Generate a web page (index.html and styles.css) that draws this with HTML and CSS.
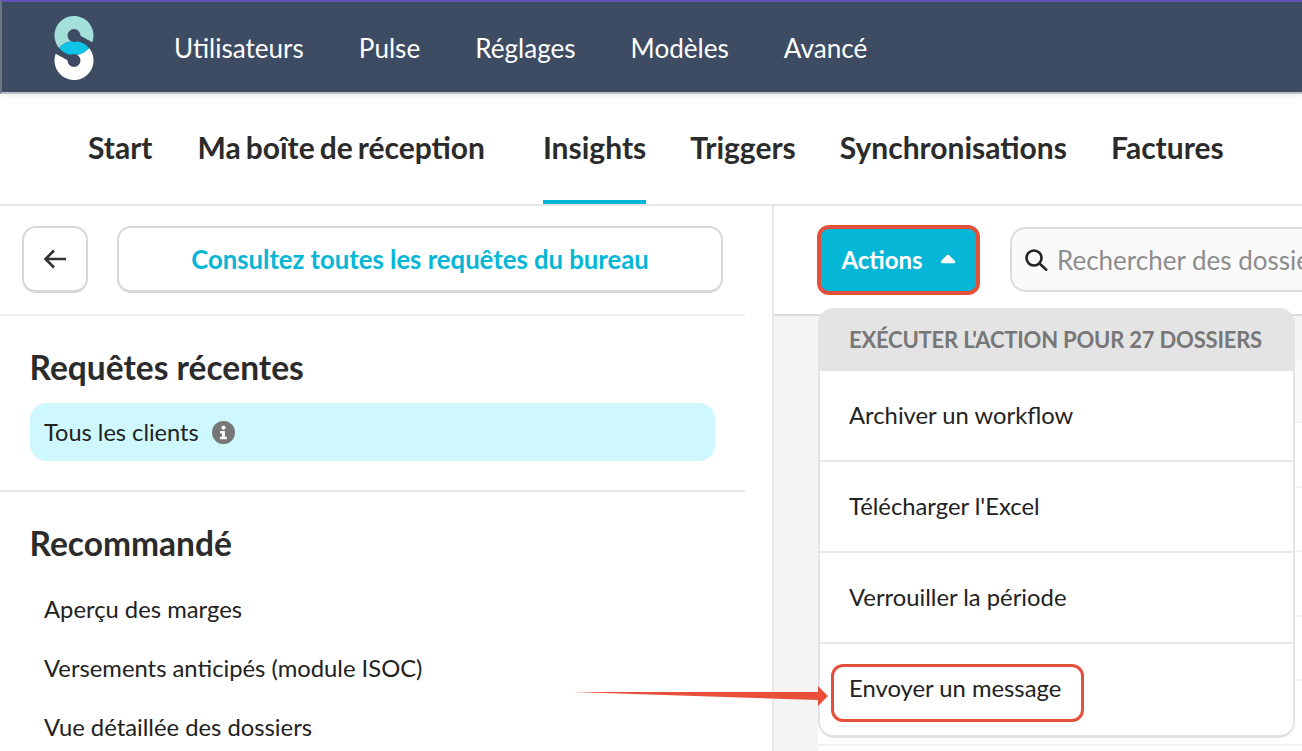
FILE: index.html
```html
<!DOCTYPE html>
<html lang="fr">
  <head>
    <meta charset="UTF-8" />
    <title>Insights</title>
    <link rel="stylesheet" href="styles.css">
  </head>
  <body>
    <header class="topbar">
      <svg class="logo" width="40" height="64" viewBox="0 0 40 64">
        <path d="M38.300 26.200A19.500 19.500 0 1 0 5 32A19.500 19.500 0 0 1 20 25L26 19.500Z" fill="#a3e0dc"/>
        <path d="M1.700 37.800A19.500 19.500 0 1 0 35 32A19.500 19.500 0 0 1 20 39L14 44.500Z" fill="#fff"/>
        <path d="M5 32A19.500 19.500 0 0 1 35 32A19.500 19.500 0 0 1 5 32Z" fill="#0fc4e6"/>
        <circle cx="20" cy="19.500" r="6.500" fill="#3d4c63"/>
        <circle cx="20" cy="44.500" r="6.500" fill="#3d4c63"/>
      </svg>
      <nav class="topnav">
        <a>Utilisateurs</a>
        <a>Pulse</a>
        <a>Réglages</a>
        <a>Modèles</a>
        <a>Avancé</a>
      </nav>
    </header>

    <nav class="tabs">
      <a>Start</a>
      <a class="inbox">Ma boîte de réception</a>
      <a class="active">Insights</a>
      <a>Triggers</a>
      <a>Synchronisations</a>
      <a>Factures</a>
    </nav>

    <main class="content">
      <aside class="sidebar">
        <div class="side-top">
          <button class="btn back">
            <svg width="24" height="22" viewBox="0 0 24 22" fill="none" stroke="#333" stroke-width="2.600">
              <path d="M23 11H3M11 2.500L2.500 11L11 19.500"/>
            </svg>
          </button>
          <button class="btn all">Consultez toutes les requêtes du bureau</button>
        </div>
        <section class="recent">
          <h2>Requêtes récentes</h2>
          <div class="selected">
            Tous les clients
            <svg width="23" height="23" viewBox="0 0 24 24">
              <circle cx="12" cy="12" r="12" fill="#777"/>
              <circle cx="12" cy="7" r="2.200" fill="#fff"/>
              <path d="M8.500 10.500H13.500V16.500H15.500V19H8.500V16.500H10.500V13H8.500Z" fill="#fff"/>
            </svg>
          </div>
        </section>
        <section class="recommended">
          <h2>Recommandé</h2>
          <ul>
            <li>Aperçu des marges</li>
            <li>Versements anticipés (module ISOC)</li>
            <li>Vue détaillée des dossiers</li>
          </ul>
        </section>
      </aside>

      <section class="main">
        <div class="toolbar">
          <button class="actions">
            Actions
            <svg width="16" height="10" viewBox="0 0 16 10">
              <path d="M8 2L14 8H2Z" fill="#fff" stroke="#fff" stroke-width="2.500" stroke-linejoin="round"/>
            </svg>
          </button>
          <div class="search">
            <svg width="23" height="22" viewBox="0 0 23 22" fill="none" stroke="#222" stroke-width="2.600">
              <circle cx="9" cy="9" r="7.500"/>
              <path d="M14.500 14.500L22 21.500"/>
            </svg>
            <span>Rechercher des dossiers</span>
          </div>
        </div>
        <div class="table-area">
          <div class="table">
            <div class="row head"></div>
            <div class="row tint"></div>
            <div class="row"></div>
            <div class="row"></div>
            <div class="row"></div>
            <div class="row"></div>
            <div class="row"></div>
          </div>
          <div class="menu">
            <div class="menu-head">EXÉCUTER L'ACTION POUR 27 DOSSIERS</div>
            <div class="menu-item">Archiver un workflow</div>
            <div class="menu-item">Télécharger l'Excel</div>
            <div class="menu-item">Verrouiller la période</div>
            <div class="menu-item last">Envoyer un message</div>
          </div>
        </div>
      </section>
    </main>

    <div class="highlight"></div>
    <svg class="arrow" width="260" height="24" viewBox="0 0 260 24">
      <path d="M0 8L246 8L246 2L256 12L246 22L246 16Z" fill="#e8503a"/>
    </svg>
  </body>
</html>
```

FILE: styles.css
```css
html, body {
  margin: 0;
  height: 751px;
  overflow: hidden;
}
body {
  background: #fff;
  color: #2b2b2b;
  font-family: Lato, "Liberation Sans", sans-serif;
  position: relative;
}
a {
  display: block;
}

.topbar {
  height: 90px;
  border-top: 2px solid #6052b8;
  border-left: 2px solid #6b7587;
  border-bottom: 2px solid #b9bec8;
  background: #3d4c63;
  display: flex;
  align-items: center;
  box-shadow: 0 2px 6px rgba(0, 0, 0, 0.08);
}
.logo {
  margin-left: 52px;
  margin-top: 1px;
}
.topnav {
  display: flex;
  gap: 55px;
  margin-left: 80px;
  margin-top: 2px;
  color: #fff;
  font-size: 26.100px;
}

.tabs {
  height: 110px;
  border-bottom: 2px solid #e8e8e8;
  padding-left: 88px;
  display: flex;
  gap: 44px;
  font-size: 30px;
  font-weight: 700;
  color: #2b2b2b;
}
.tabs a {
  height: 110px;
  line-height: 106px;
  box-sizing: border-box;
}
.tabs .inbox {
  margin-left: 1px;
  margin-right: 14px;
  word-spacing: -2.300px;
}
.tabs .active {
  border-bottom: 4px solid #06b6d6;
}

.content {
  display: flex;
  height: 545px;
}

.sidebar {
  width: 772px;
  border-right: 2px solid #e8e8e8;
}
.side-top {
  width: 745px;
  height: 110px;
  box-sizing: border-box;
  border-bottom: 2px solid #efefef;
  padding: 20px 0 0 22px;
  display: flex;
  gap: 29px;
}
.btn {
  height: 67px;
  background: #fff;
  border: 2px solid #d8d8d8;
  border-bottom-width: 3px;
  border-radius: 14px;
  font-family: inherit;
  padding: 0;
}
.back {
  width: 66px;
  display: flex;
  align-items: center;
  justify-content: center;
}
.all {
  width: 606px;
  color: #06b6d6;
  font-size: 25.700px;
  font-weight: 700;
}

.recent {
  width: 745px;
  height: 176px;
  box-sizing: border-box;
  border-bottom: 2px solid #e6e6e6;
  padding: 31px 30px 0 29.500px;
}
h2 {
  margin: 0;
  font-size: 33.500px;
  line-height: 40px;
  font-weight: 700;
  color: #2b2b2b;
}
.selected {
  margin-top: 16px;
  height: 58px;
  border-radius: 16px;
  background: #cff8fe;
  padding-left: 14.500px;
  display: flex;
  align-items: center;
  gap: 13px;
  font-size: 23.600px;
  color: #222;
}

.recommended {
  padding: 31px 30px 0 29.500px;
}
ul {
  list-style: none;
  margin: 24px 0 0 0;
  padding: 0 0 0 14.500px;
  font-size: 23.800px;
  color: #222;
}
li {
  height: 59px;
  line-height: 44px;
}

.main {
  flex: 1;
  min-width: 0;
}
.toolbar {
  height: 110px;
  box-sizing: border-box;
  border-bottom: 2px solid #dcdcdc;
  padding: 19px 0 0 43px;
  display: flex;
  gap: 30px;
  overflow: hidden;
}
.actions {
  width: 163px;
  height: 70px;
  box-sizing: border-box;
  border: 4px solid #e5503c;
  border-radius: 12px;
  background: #06b6d6;
  color: #fff;
  font-family: inherit;
  font-size: 24px;
  font-weight: 700;
  flex: none;
  padding: 0 0 2px 0;
  display: flex;
  align-items: center;
  justify-content: center;
  gap: 17px;
}
.search {
  margin-top: 2px;
  width: 400px;
  height: 65px;
  box-sizing: border-box;
  border: 2px solid #dcdcdc;
  border-radius: 16px;
  background: #fafafa;
  padding-left: 13px;
  display: flex;
  align-items: center;
  gap: 9px;
  flex: none;
  color: #8d8d8d;
  font-size: 26px;
  white-space: nowrap;
}

.table-area {
  height: 435px;
  background: #f4f4f4;
  padding-left: 44px;
  position: relative;
}
.table {
  background: #fff;
  height: 435px;
}
.row {
  height: 64.500px;
  box-sizing: border-box;
  border-bottom: 2px solid #f2f2f2;
}
.row.head {
  height: 44px;
  background: #f4f4f4;
  border-bottom: 0;
}
.row.tint {
  height: 63px;
  background: #f9f9f9;
}
.menu {
  position: absolute;
  left: 44px;
  top: -8px;
  width: 477px;
  height: 430px;
  box-sizing: border-box;
  background: #fff;
  border: 2px solid #e4e4e4;
  border-top: 0;
  border-bottom-width: 3px;
  border-radius: 16px;
}
.menu-head {
  height: 62.500px;
  margin: 0 -2px;
  background: #e4e4e4;
  border-radius: 16px 16px 0 0;
  color: #777;
  font-size: 22px;
  font-weight: 700;
  line-height: 63px;
  padding-left: 31px;
  letter-spacing: -0.200px;
  white-space: nowrap;
}
.menu-item {
  height: 91.200px;
  box-sizing: border-box;
  border-bottom: 2px solid #e8e8e8;
  padding-left: 29px;
  font-size: 23.800px;
  line-height: 89px;
  color: #222;
}
.menu-item.last {
  border-bottom: 0;
}

.highlight {
  position: absolute;
  left: 831px;
  top: 664px;
  width: 253px;
  height: 58px;
  box-sizing: border-box;
  border: 3.500px solid #e5503c;
  border-radius: 12px;
}
.arrow {
  position: absolute;
  left: 572px;
  top: 684px;
}
```
